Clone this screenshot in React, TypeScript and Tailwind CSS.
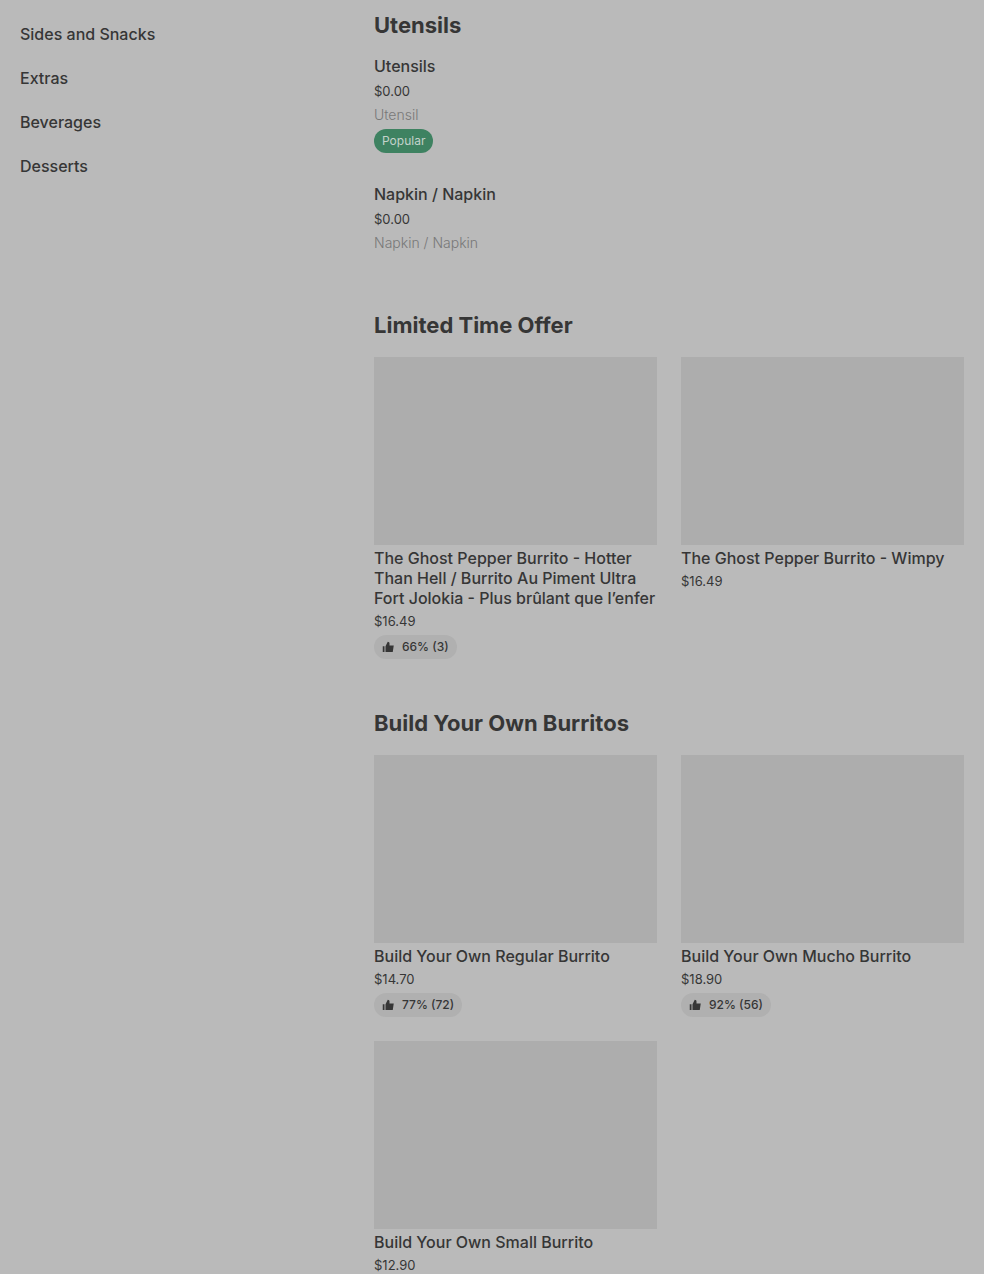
type MenuItem = { name: string; price: string; description?: string; popular?: boolean; rating?: string; photo?: boolean };

const categories: { label: string; id: string }[] = [
  { label: 'Sides and Snacks', id: 'sides' },
  { label: 'Extras', id: 'extras' },
  { label: 'Beverages', id: 'beverages' },
  { label: 'Desserts', id: 'desserts' },
];

const utensils: MenuItem[] = [
  { name: 'Utensils', price: '$0.00', description: 'Utensil', popular: true },
  { name: 'Napkin / Napkin', price: '$0.00', description: 'Napkin / Napkin' },
];

const limitedTime: MenuItem[] = [
  {
    name: 'The Ghost Pepper Burrito - Hotter Than Hell / Burrito Au Piment Ultra Fort Jolokia - Plus brûlant que l’enfer',
    price: '$16.49',
    rating: '66% (3)',
    photo: true,
  },
  { name: 'The Ghost Pepper Burrito - Wimpy', price: '$16.49', photo: true },
];

const burritos: MenuItem[] = [
  { name: 'Build Your Own Regular Burrito', price: '$14.70', rating: '77% (72)', photo: true },
  { name: 'Build Your Own Mucho Burrito', price: '$18.90', rating: '92% (56)', photo: true },
  { name: 'Build Your Own Small Burrito', price: '$12.90', photo: true },
];

function ThumbIcon() {
  return (
    <svg viewBox="0 0 24 24" className="size-3" fill="currentColor" aria-hidden="true">
      <path d="M1.5 10.5H5V22H1.5z" />
      <path d="M7 10.5 11.5 1.5c2.2 0 3.5 1.4 3.5 3.5v4h8.5L21.5 22H7z" />
    </svg>
  );
}

function ItemCard({ item }: { item: MenuItem }) {
  return (
    <li>
      <a href="#item" className="block">
        {item.photo && <div className="h-47 bg-[#adadad]" />}
        <h3 className={`text-base leading-5 font-medium ${item.photo ? 'mt-[3px] mb-px' : '-mt-px mb-[3px]'}`}>{item.name}</h3>
        <p className="text-[13px] leading-6">{item.price}</p>
        {item.description && <p className="text-sm leading-6 font-light text-[#787878]">{item.description}</p>}
        {item.popular && (
          <span className="mt-0.5 flex h-6 w-fit items-center rounded-full bg-[#3e8261] px-2 text-xs text-[#c4d2cb]">
            Popular
          </span>
        )}
        {item.rating && (
          <span className="mt-0.5 flex h-6 w-fit items-center gap-2 rounded-full bg-[#b0b0b0] px-2 text-xs font-medium">
            <ThumbIcon />
            {item.rating}
          </span>
        )}
      </a>
    </li>
  );
}

function SectionTitle({ children }: { children: string }) {
  return <h2 className="mb-4 text-[22px] leading-8 font-bold">{children}</h2>;
}

export default function App() {
  return (
    <div className="flex min-h-screen items-start bg-[#bababa] px-5 font-['Inter','Liberation_Sans',sans-serif] text-[#363636]">
      {/* CATEGORIES */}
      <nav className="w-3/8 pt-3" aria-label="Menu categories">
        <ul>
          {categories.map((category) => (
            <li key={category.id}>
              <a href={`#${category.id}`} className="block py-3 text-base leading-5 font-medium">
                {category.label}
              </a>
            </li>
          ))}
        </ul>
      </nav>

      {/* MENU */}
      <main className="w-5/8 pt-[9px]">
        <section className="mb-12">
          <SectionTitle>Utensils</SectionTitle>
          <ul className="grid gap-8 pb-1.5">
            {utensils.map((item) => (
              <ItemCard key={item.name} item={item} />
            ))}
          </ul>
        </section>

        <section className="mb-12">
          <SectionTitle>Limited Time Offer</SectionTitle>
          <ul className="grid grid-cols-2 gap-6">
            {limitedTime.map((item) => (
              <ItemCard key={item.name} item={item} />
            ))}
          </ul>
        </section>

        <section>
          <SectionTitle>Build Your Own Burritos</SectionTitle>
          <ul className="grid grid-cols-2 gap-6">
            {burritos.map((item) => (
              <ItemCard key={item.name} item={item} />
            ))}
          </ul>
        </section>
      </main>
    </div>
  );
}
